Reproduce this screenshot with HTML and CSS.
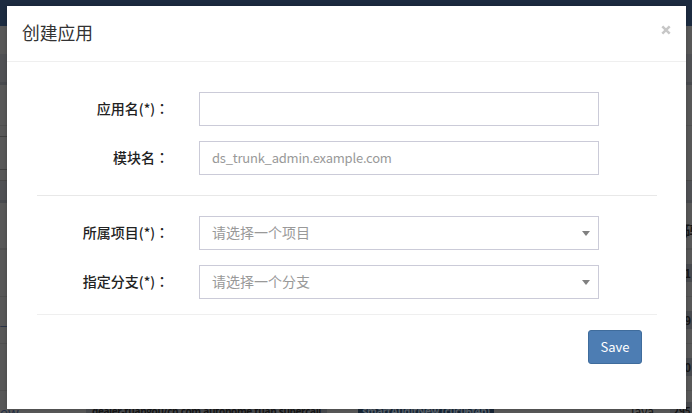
FILE: index.html
```html
<!DOCTYPE html>
<html lang="zh-CN">
<head>
<meta charset="utf-8">
<title>创建应用</title>
<link rel="stylesheet" href="styles.css">
</head>
<body>
<div class="page">
  <div class="navbar"></div>
  <div class="toolbar"></div>
  <div class="panel"><div class="search"></div></div>
  <div class="divider"></div>
  <div class="table">
    <div class="row head"><span class="version">码</span></div>
    <div class="row"><span class="version tag">1</span></div>
    <div class="row"><a class="link">_1</a><span class="version tag">9</span></div>
    <div class="row"><span class="version tag">0</span></div>
    <div class="row last"><a class="link">ew</a><span class="tag name">dealer-tuangou/cn.com.autohome.tuan.supercall</span><span class="tag branch">smartAuditNew (c0c06f4b)</span><span class="lang">Java</span><span class="tag count">295</span></div>
  </div>
</div>
<div class="modal">
  <header class="modal-header">
    <h4>创建应用</h4>
    <svg class="close" viewBox="0 0 10 10"><path d="M1.3 1.3 8.7 8.7M8.7 1.3 1.3 8.7"/></svg>
  </header>
  <form class="form">
    <div class="field"><label>应用名<span class="req">(*)</span><span class="colon" lang="zh-TW">：</span></label><div class="control"></div></div>
    <div class="field"><label>模块名<span class="colon" lang="zh-TW">：</span></label><div class="control latin">ds_trunk_admin.example.com</div></div>
    <hr>
    <div class="field"><label>所属项目<span class="req">(*)</span><span class="colon" lang="zh-TW">：</span></label><div class="control">请选择一个项目<i class="caret"></i></div></div>
    <div class="field"><label>指定分支<span class="req">(*)</span><span class="colon" lang="zh-TW">：</span></label><div class="control">请选择一个分支<i class="caret"></i></div></div>
    <hr class="end">
    <div class="actions"><button type="button">Save</button></div>
  </form>
</div>
</body>
</html>
```
FILE: styles.css
```css
* { box-sizing: border-box; }
body {
  margin: 0;
  height: 413px;
  overflow: hidden;
  position: relative;
  background: #585858;
  font: 14px/20px "Noto Sans CJK SC", sans-serif;
  color: #333;
}
.page { height: 413px; overflow: hidden; color: #161616; }
.navbar { height: 26px; background: #1c2b40; }
.toolbar { height: 59px; background: linear-gradient(#585858 50%, #505154 50%); border-bottom: 3px solid #484a4e; }
.panel { height: 96px; padding-top: 51px; border-bottom: 1px solid #484848; background: linear-gradient(#505050, #505050) 0 40px / 100% 1px no-repeat; }
.search { width: 100px; height: 34px; border: solid #404040; border-width: 1px 0; }
.divider { height: 22px; background: #505154; border-bottom: 3px solid #484a4e; }
.row {
  height: 47px;
  display: flex;
  align-items: center;
  border-bottom: 1px solid #505050;
  font-size: 14px;
  white-space: nowrap;
}
.head { border-bottom-width: 2px; padding-top: 8px; }
.version { width: 12px; height: 18px; line-height: 18px; margin-left: auto; font-weight: bold; text-align: right; }
.row .version.tag { padding-right: 1px; }
.head .version { width: 14px; margin-right: -6px; height: 20px; line-height: 20px; }
.tag { background: #484a4e; font-size: 11px; font-weight: bold; }
.link { color: #222e46; width: 18px; font-size: 13px; }
.last { align-items: flex-start; padding-top: 11px; }
.last .tag, .last .lang { height: 20px; line-height: 20px; flex: none; }
.last .link { width: 86px; flex: none; font-size: 14px; }
.last .name { width: 241px; font: bold 10px/18px "Open Sans", sans-serif; letter-spacing: -.38px; text-align: center; }
.last .branch { width: 136px; margin-left: 31px; background: #172535; color: #59616b; font: bold 10px/18px "Open Sans", sans-serif; letter-spacing: -.2px; text-align: center; }
.last .lang { width: 42px; margin-left: 134px; font-size: 12px; line-height: 18px; }
.last .count { width: 22px; padding-left: 3px; font-size: 10px; line-height: 18px; }
.modal {
  position: absolute;
  left: 7px;
  top: 6px;
  width: 679px;
  height: 403px;
  background: #fff;
  box-shadow: 0 0 4px rgba(0, 0, 0, .2);
}
.modal-header {
  height: 56px;
  padding: 0 15px;
  display: flex;
  justify-content: space-between;
  border-bottom: 1px solid #efefef;
}
.modal-header h4 { margin: 14px 0 0; font-size: 17.8px; line-height: 24px; font-weight: 400; }
.close { width: 10px; height: 10px; margin-top: 19px; fill: none; stroke: #c7c7c7; stroke-width: 2.5; }
.form { padding: 30px 29px 0 30px; }
.field { display: flex; height: 34px; margin-bottom: 15px; }
.field label {
  width: 132px;
  margin-right: 30px;
  text-align: right;
  line-height: 32px;
  font-weight: 500;
  color: #222;
}
.req { font-size: 13.5px; }
.colon { font-family: "Noto Sans CJK TC", sans-serif; }
.control {
  width: 400px;
  height: 34px;
  padding: 0 12px 2px;
  border: 1px solid #cbcbd8;
  display: flex;
  align-items: center;
  justify-content: space-between;
  color: #999;
  font-size: 14px;
}
.latin { font-size: 13px; letter-spacing: -.22px; padding-bottom: 0; }
.caret { width: 0; height: 0; border: solid transparent; border-width: 5px 4px 0; border-top-color: #808080; margin: 2px -4px 0 0; }
hr { height: 1px; border: 0; margin: 20px 0; background: #e8e8e8; }
hr.end { margin: 15px 0; background: #efefef; }
.actions { display: flex; justify-content: flex-end; padding-right: 15px; }
button {
  width: 54px;
  height: 34px;
  padding: 0 0 1px;
  border: 1px solid #3f6c9c;
  border-radius: 3px;
  background: #4d7db3;
  color: #fff;
  font: 13px/20px "Noto Sans CJK SC", sans-serif;
}
```
